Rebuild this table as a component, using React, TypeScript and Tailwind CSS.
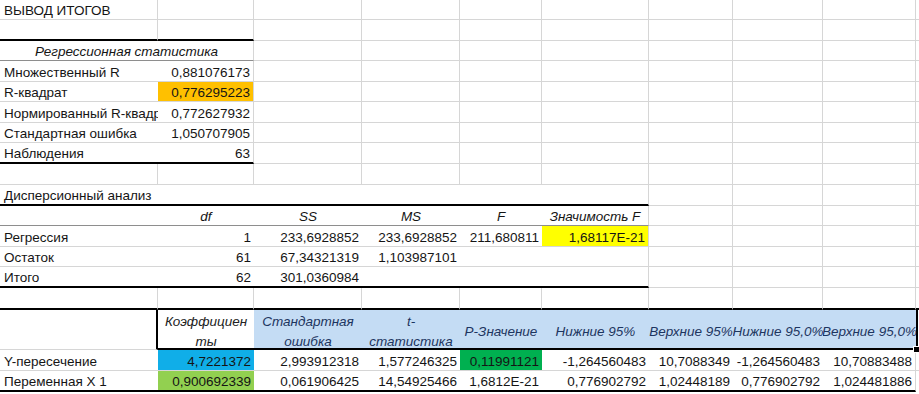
import React from 'react';

type Al = 'l' | 'r' | 'c';
type C = {
  t?: React.ReactNode;
  a?: Al;
  i?: boolean;
  bg?: string;
  r?: string;
  b?: string;
  span?: boolean;
  ov?: boolean;
  hdr?: boolean;
  cls?: string;
};

const GR = 'border-r border-r-[#d6d6d6]';
const GB = 'border-b border-b-[#d6d6d6]';
const TB = 'border-b-2 border-b-black';
const DB = 'border-b border-b-[#8e8e8e]';

function Cell({ c }: { c: C }) {
  const just =
    c.a === 'r' ? 'justify-end pr-[3px]' : c.a === 'c' ? 'justify-center' : 'justify-start pl-[4px]';
  const vert = c.hdr ? 'items-center pt-[5px]' : 'items-end pb-0';
  return (
    <div
      className={[
        'flex whitespace-nowrap leading-[16px]',
        vert,
        just,
        c.ov ? 'overflow-visible relative z-10' : 'overflow-hidden',
        c.i ? 'italic' : '',
        c.bg ?? '',
        c.r ?? GR,
        c.b ?? GB,
        c.span ? 'col-span-2' : '',
        c.cls ?? '',
      ].join(' ')}
    >
      {c.t}
    </div>
  );
}

const blank = (n: number): C[] => Array.from({ length: n }, () => ({}));
const F: C = { r: '' };
const FT: C = { r: '', b: TB };

const HB = 'bg-[#c4dcf4] text-[#1d3560]';

function H2({ a, b }: { a: string; b: string }) {
  return (
    <div className="flex flex-col items-center leading-[20px]">
      <span>{a}</span>
      <span>{b}</span>
    </div>
  );
}

const rows: C[][] = [
  // 1
  [{ t: 'ВЫВОД ИТОГОВ' }, ...blank(8), F],
  // 2
  [{ b: TB }, { b: TB }, ...blank(7), F],
  // 3
  [{ t: 'Регрессионная статистика', a: 'c', i: true, span: true, b: DB }, ...blank(7), F],
  // 4
  [{ t: 'Множественный R', r: '' }, { t: '0,881076173', a: 'r' }, ...blank(7), F],
  // 5
  [{ t: 'R-квадрат', r: '' }, { t: '0,776295223', a: 'r', bg: 'bg-[#ffc000]' }, ...blank(7), F],
  // 6
  [{ t: 'Нормированный R-квадрат', r: '' }, { t: '0,772627932', a: 'r' }, ...blank(7), F],
  // 7
  [{ t: 'Стандартная ошибка', r: '' }, { t: '1,050707905', a: 'r' }, ...blank(7), F],
  // 8
  [{ t: 'Наблюдения', r: '', b: TB }, { t: '63', a: 'r', b: TB }, ...blank(7), F],
  // 9
  [...blank(9), F],
  // 10
  [
    { t: 'Дисперсионный анализ', r: '', b: TB, ov: true },
    { r: '', b: TB },
    { r: '', b: TB },
    { r: '', b: TB },
    { r: '', b: TB },
    { b: TB },
    ...blank(3),
    F,
  ],
  // 11
  [
    { r: '', b: DB },
    { t: 'df', a: 'c', i: true, r: '', b: DB },
    { t: 'SS', a: 'c', i: true, r: '', b: DB },
    { t: 'MS', a: 'c', i: true, r: '', b: DB },
    { t: 'F', a: 'c', i: true, r: '', b: DB },
    { t: 'Значимость F', a: 'c', i: true, b: DB },
    ...blank(3),
    F,
  ],
  // 12
  [
    { t: 'Регрессия', r: '' },
    { t: '1', a: 'r', r: '' },
    { t: '233,6928852', a: 'r', r: '' },
    { t: '233,6928852', a: 'r', r: '' },
    { t: '211,680811', a: 'r', r: '' },
    { t: '1,68117E-21', a: 'r', bg: 'bg-[#ffff00]' },
    ...blank(3),
    F,
  ],
  // 13
  [
    { t: 'Остаток', r: '' },
    { t: '61', a: 'r', r: '' },
    { t: '67,34321319', a: 'r', r: '' },
    { t: '1,103987101', a: 'r', r: '' },
    { r: '' },
    {},
    ...blank(3),
    F,
  ],
  // 14
  [
    { t: 'Итого', r: '', b: TB },
    { t: '62', a: 'r', r: '', b: TB },
    { t: '301,0360984', a: 'r', r: '', b: TB },
    { r: '', b: TB },
    { r: '', b: TB },
    { b: TB },
    ...blank(3),
    F,
  ],
  // 15
  [
    { b: TB },
    { b: TB },
    { b: TB },
    { b: TB },
    { b: TB },
    { b: TB },
    { b: TB },
    { b: TB },
    { b: TB },
    FT,
  ],
  // 16
  [
    { r: 'border-r-2 border-r-black', b: GB },
    { t: <H2 a="Коэффициен" b="ты" />, a: 'c', i: true, hdr: true, r: '', b: TB, cls: 'text-[#222]' },
    { t: <H2 a="Стандартная" b="ошибка" />, a: 'c', i: true, hdr: true, r: '', b: TB, bg: HB },
    { t: <H2 a="t-" b="статистика" />, a: 'c', i: true, hdr: true, r: '', b: TB, bg: HB },
    { t: 'P-Значение', a: 'c', i: true, hdr: true, r: '', b: TB, bg: HB },
    { t: 'Нижние 95%', a: 'c', i: true, hdr: true, r: '', b: TB, bg: HB },
    { t: 'Верхние 95%', a: 'c', i: true, hdr: true, r: '', b: TB, bg: HB },
    { t: 'Нижние 95,0%', a: 'c', i: true, hdr: true, r: '', b: TB, bg: HB },
    { t: 'Верхние 95,0%', a: 'c', i: true, hdr: true, r: '', b: TB, bg: HB },
    { r: '', b: TB, cls: 'border-l-2 border-l-black' },
  ],
  // 17
  [
    { t: 'Y-пересечение', r: '' },
    { t: '4,7221372', a: 'r', r: '', bg: 'bg-[#10aee8]' },
    { t: '2,993912318', a: 'r', r: '' },
    { t: '1,577246325', a: 'r', r: '' },
    { t: '0,11991121', a: 'r', r: '', bg: 'bg-[#00b050]' },
    { t: '-1,264560483', a: 'r', r: '' },
    { t: '10,7088349', a: 'r', r: '' },
    { t: '-1,264560483', a: 'r', r: '' },
    { t: '10,70883488', a: 'r' },
    F,
  ],
  // 18
  [
    { t: 'Переменная X 1', r: '', b: TB },
    { t: '0,900692339', a: 'r', r: '', b: TB, bg: 'bg-[#92d050]' },
    { t: '0,061906425', a: 'r', r: '', b: TB },
    { t: '14,54925466', a: 'r', r: '', b: TB },
    { t: '1,6812E-21', a: 'r', r: '', b: TB },
    { t: '0,776902792', a: 'r', r: '', b: TB },
    { t: '1,02448189', a: 'r', r: '', b: TB },
    { t: '0,776902792', a: 'r', r: '', b: TB },
    { t: '1,024481886', a: 'r', b: TB },
    { r: '', b: '' },
  ],
];

export default function App() {
  return (
    <div className="w-[919px] h-[394px] bg-white overflow-hidden font-['Liberation_Sans',sans-serif] text-[13.5px] text-[#151515]">
      <div className="relative grid grid-cols-[158px_96px_108px_98px_82px_107px_84px_90px_93px_3px] grid-rows-[20px_21px_20px_21px_20px_21px_20px_21px_21px_21px_20px_21px_20px_21px_22px_40px_21px_21px]">
        {rows.map((row, ri) =>
          row.map((c, ci) => <Cell key={`${ri}-${ci}`} c={c} />)
        )}
        <div className="absolute left-[913px] top-[346px] w-[7px] h-[7px] bg-black border border-white" />
      </div>
    </div>
  );
}
